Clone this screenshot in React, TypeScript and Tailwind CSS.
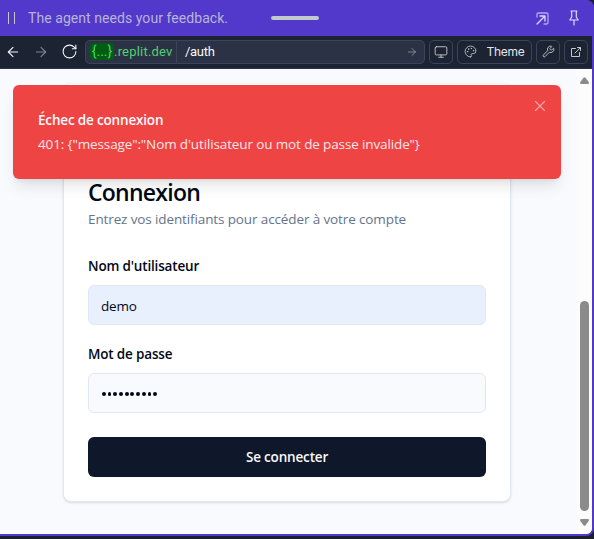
import React from "react";
import { ArrowLeft, ArrowRight, RotateCw, Monitor, Palette, Wrench, X } from "lucide-react";

const ui = "font-['Open_Sans','Noto_Sans',sans-serif]";
const plex = "font-['Roboto','Inter',sans-serif]";
const tool = "flex h-6 shrink-0 items-center justify-center rounded-[5px] border border-[#3c445c] text-[#c2c8cc]";

function Header() {
  return (
    <header className="relative flex h-9 shrink-0 items-center rounded-tr-lg bg-[#5239cc] text-[#c2c8cc]">
      <div className="ml-2 flex w-[7px] justify-between">
        <i className="h-3 w-px bg-[#c2c8cc]" />
        <i className="h-3 w-px bg-[#c2c8cc]" />
      </div>
      <span className="ml-[13px] whitespace-nowrap text-sm tracking-[0.06px] text-[#b8b4d4]">The agent needs your feedback.</span>
      <i className="absolute left-[271px] top-4 h-1 w-12 rounded-full bg-[#c2c8cc]" />
      <svg className="ml-auto mr-[20px]" width="13" height="13" viewBox="0 0 13 13" fill="none" stroke="#ded9f7" strokeWidth="1.3" strokeLinecap="round" strokeLinejoin="round">
        <path d="M1 5V2.2C1 1.4 1.6 1 2.4 1h8.2c.8 0 1.4.5 1.4 1.3v8.3c0 .8-.6 1.4-1.4 1.4H8" stroke="#b3a8ec" />
        <path d="M1 12 9 4M4 4h5v5" />
      </svg>
      <svg className="mr-[15px]" width="10" height="16" viewBox="0 0 10 16" fill="none" stroke="#ded9f7" strokeWidth="1.2" strokeLinecap="round" strokeLinejoin="round">
        <path d="M2 1h6M2.7 1v6L.8 10h8.4L7.3 7V1M5 10v5" />
      </svg>
    </header>
  );
}

function Toolbar() {
  return (
    <div className="mr-0.5 flex h-[33px] shrink-0 items-center border-b border-[#2b3245] bg-[#1c2333] pb-px pl-[5px] pr-1">
      <ArrowLeft size={16} strokeWidth={1.6} className="text-[#f5f9fc]" />
      <ArrowRight size={16} strokeWidth={1.6} className="ml-3 text-[#80868c]" />
      <RotateCw size={17} strokeWidth={1.5} className="ml-3 text-[#f5f9fc]" />
      <div className="ml-[7px] flex h-6 w-[340px] items-center rounded-[5px] border border-[#3c445c] bg-[#2b3245] text-[13px]">
        <span className="ml-1 flex h-[17px] w-6 items-center justify-center rounded bg-[#005e12] text-[14px] text-[#50d16e]">{"{...}"}</span>
        <span className="w-[62px] whitespace-nowrap text-[13px] tracking-[0.2px] text-[#50d16e]">.replit.dev</span>
        <i className="h-[22px] w-px bg-[#3c445c]" />
        <span className="ml-2 text-[13px] tracking-[-0.3px] text-[#f5f9fc]">/auth</span>
        <ArrowRight size={12} strokeWidth={1.8} className="ml-auto mr-1.5 text-[#8b9197]" />
      </div>
      <div className={`ml-1 w-6 ${tool}`}><Monitor size={14} strokeWidth={1.6} /></div>
      <div className={`ml-1 w-[75px] gap-[9px] ${tool}`}><Palette size={13} strokeWidth={1.6} /><span className="text-xs tracking-[-0.25px] text-[#e3e7ea] font-['Inter',sans-serif]">Theme</span></div>
      <div className={`ml-1 w-6 ${tool}`}><Wrench size={13} strokeWidth={1.7} /></div>
      <div className={`ml-1 w-6 ${tool}`}>
        <svg width="10" height="10" viewBox="0 0 10 10" fill="none" stroke="currentColor" strokeWidth="1" strokeLinecap="round" strokeLinejoin="round">
          <path d="M4.5 1.5h-4v8h8v-4M6.5.5h3v3M9.3.7 4 6" />
        </svg>
      </div>
    </div>
  );
}

function Toast() {
  return (
    <div className="absolute left-[13px] top-4 flex h-[94px] w-[548px] flex-col rounded-md bg-[#ef4444] pl-[25px] pt-[25px] text-[13.5px] leading-5 text-[#f8fafc] shadow-lg">
      <strong className="self-start whitespace-nowrap font-semibold tracking-[-0.17px]">Échec de connexion</strong>
      <span className="mt-1 self-start whitespace-nowrap tracking-[-0.13px] opacity-90">{'401: {"message":"Nom d\'utilisateur ou mot de passe invalide"}'}</span>
      <X size={18} strokeWidth={1.5} className="absolute right-3 top-3 text-[#fca5a5]" />
    </div>
  );
}

function LoginCard() {
  return (
    <section className="mx-auto mt-[14px] h-[419px] w-[448px] rounded-lg border border-[#e2e8f0] border-t-[#f1f5f9] bg-white px-6 pt-[97px] text-[#020817] shadow-sm">
      <h1 className="h-6 whitespace-nowrap text-[23px] font-semibold leading-[23px] tracking-[-0.75px]">Connexion</h1>
      <p className="mt-1 whitespace-nowrap text-[13.5px] leading-5 tracking-[-0.12px] text-[#64748b]">Entrez vos identifiants pour accéder à votre compte</p>
      <form className="mt-[27px] flex flex-col text-[13.5px] tracking-[-0.17px]">
        <label className="h-5 leading-5 font-semibold">Nom d'utilisateur</label>
        <div className="mt-[9px] flex h-10 items-center rounded-md border border-[#e2e8f0] bg-[#e8f0fe] px-3 pt-0.5">demo</div>
        <label className="mt-[19px] h-5 leading-5 font-semibold">Mot de passe</label>
        <div className="mt-[9px] flex h-10 items-center gap-[1.9px] rounded-md border border-[#e2e8f0] bg-[#f8fafe] px-[13px] pt-0.5">
          {Array.from({ length: 10 }, (_, i) => <i key={i} className="size-[3.8px] rounded-full bg-[#020817]" />)}
        </div>
        <button type="button" className="mt-6 h-10 rounded-md bg-[#0f172a] font-semibold text-[#f8fafc]">Se connecter</button>
      </form>
    </section>
  );
}

function Scrollbar() {
  return (
    <div className="flex w-[15px] shrink-0 flex-col items-center bg-[#fcfcfc]">
      <svg className="mt-2" width="9" height="7" viewBox="0 0 9 7" fill="#8b8b8b"><path d="M3.5.8Q4.5-.4 5.5.8L8.7 5Q9.4 7 8 7H1Q-.4 7 .3 5Z" /></svg>
      <i className="mt-[217px] h-[210px] w-[9px] rounded-full bg-[#8b8b8b]" />
      <svg className="mt-2 rotate-180" width="9" height="7" viewBox="0 0 9 7" fill="#8b8b8b"><path d="M3.5.8Q4.5-.4 5.5.8L8.7 5Q9.4 7 8 7H1Q-.4 7 .3 5Z" /></svg>
    </div>
  );
}

export default function App() {
  return (
    <div className={`h-[539px] w-[594px] overflow-hidden bg-[#1a2030] ${plex}`}>
      <div className="flex h-[536px] flex-col rounded-br-lg rounded-tr-lg bg-[#5239cc]">
        <Header />
        <Toolbar />
        <main className={`relative mr-0.5 flex h-[465px] overflow-hidden rounded-br-md bg-[#f8fafe] ${ui}`}>
          <div className="w-[577px] pr-[3px]"><LoginCard /></div>
          <Scrollbar />
          <Toast />
        </main>
      </div>
    </div>
  );
}
